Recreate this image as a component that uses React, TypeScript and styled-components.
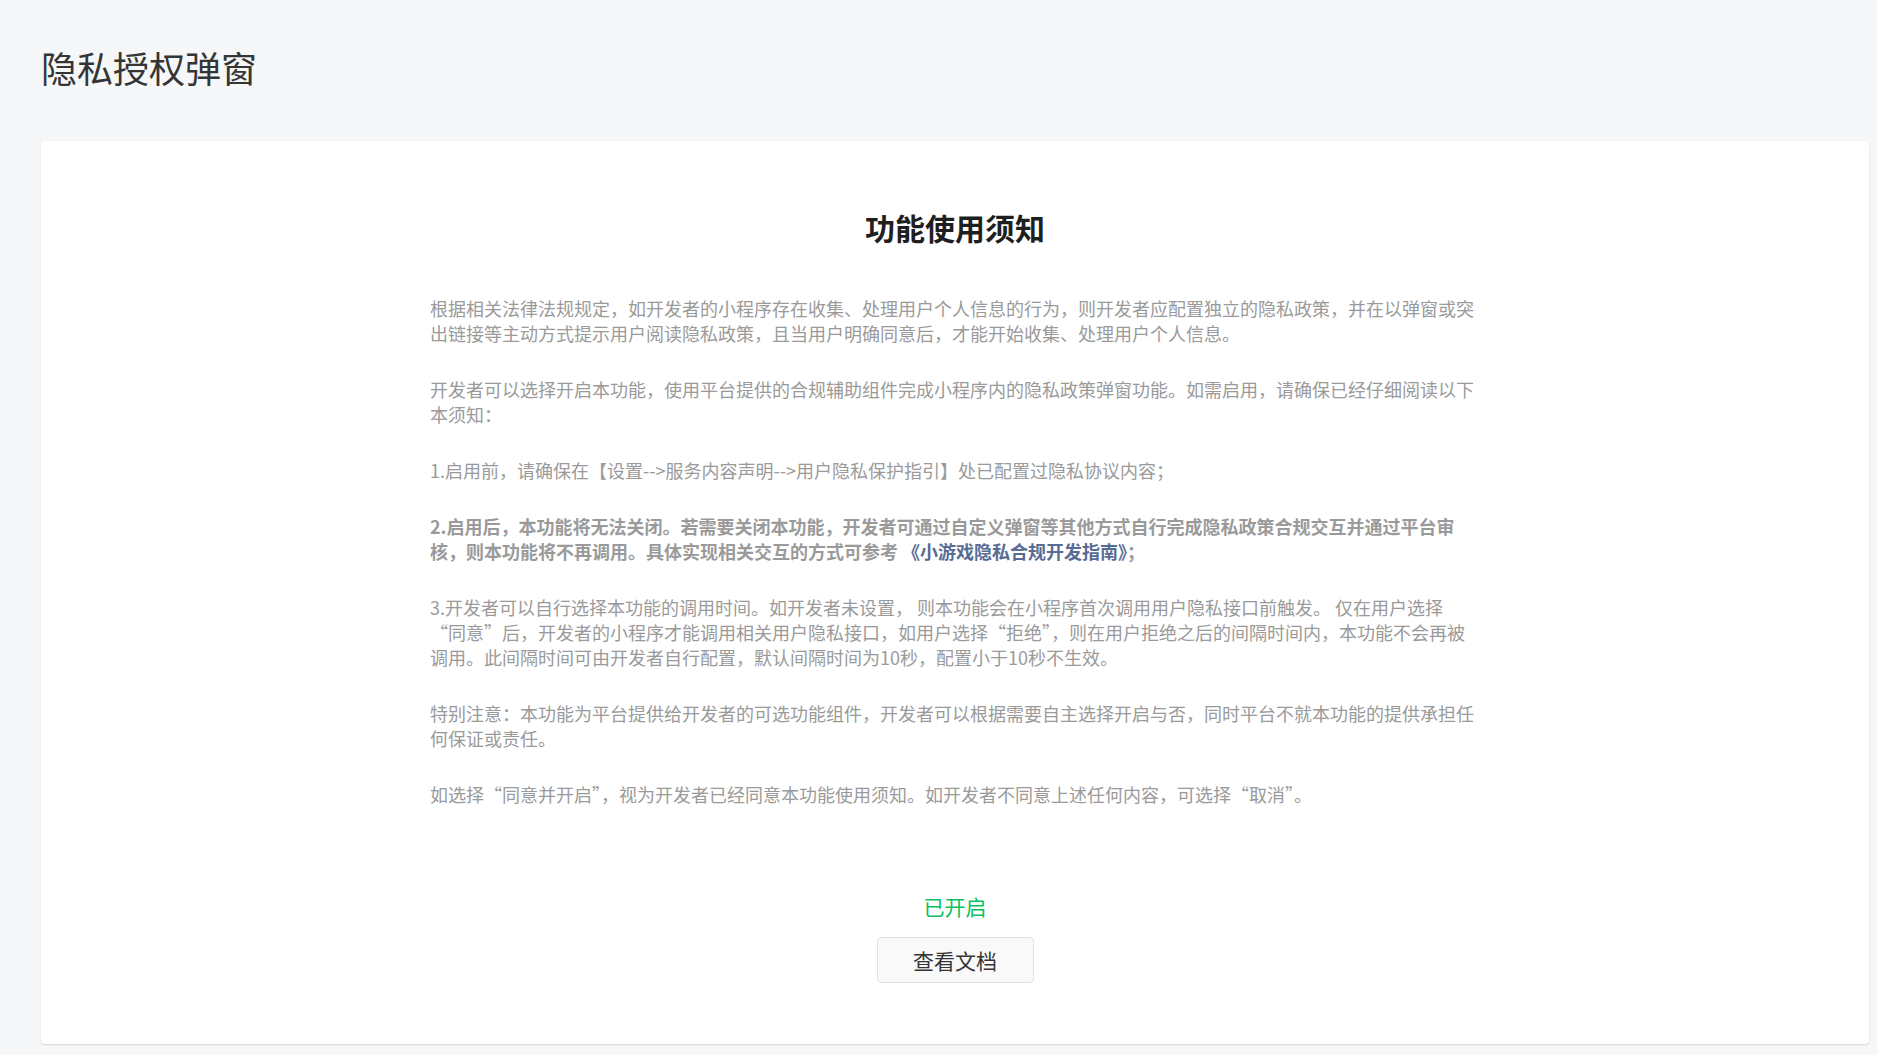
import styled, { createGlobalStyle } from 'styled-components';

const GlobalStyle = createGlobalStyle`
  html, body {
    margin: 0;
    padding: 0;
    background: #f6f7f9;
  }
  body {
    font-family: "Noto Sans CJK SC", "Noto Sans", sans-serif;
  }
`;

const Page = styled.div`
  min-height: 1055px;
  box-sizing: border-box;
  padding: 0 8px 11px 41px;
  display: flex;
  flex-direction: column;
`;

const PageTitle = styled.h1`
  margin: 0;
  padding-top: 42px;
  height: 141px;
  box-sizing: border-box;
  font-size: 36px;
  line-height: 50px;
  font-weight: 400;
  color: #353535;
`;

const Card = styled.section`
  background: #fff;
  border-radius: 4px;
  box-shadow: 0 1px 2px rgba(0, 0, 0, 0.14);
  padding: 66px 0 61px;
  display: flex;
  flex-direction: column;
  align-items: center;
`;

const Heading = styled.h2`
  margin: 0 0 49px;
  font-size: 30px;
  line-height: 40px;
  font-weight: 700;
  color: #1f1f1f;
`;

const Notice = styled.div`
  width: 1050px;
  display: flex;
  flex-direction: column;
  gap: 31px;
`;

const Para = styled.p<{ $strong?: boolean }>`
  margin: 0;
  font-size: 18px;
  line-height: 25px;
  color: #9a9a9a;
  font-weight: ${(p) => (p.$strong ? 700 : 400)};
`;

// keeps a quoted word (or word pair) on one line
const Keep = styled.span`
  white-space: nowrap;
`;

const Link = styled.a`
  color: #576b95;
  text-decoration: none;
  cursor: pointer;
`;

const Status = styled.div`
  margin-top: 85px;
  font-size: 21px;
  line-height: 28px;
  color: #07c160;
`;

const DocButton = styled.button`
  margin-top: 17px;
  width: 157px;
  height: 46px;
  box-sizing: border-box;
  border: 1px solid #e2e2e2;
  border-radius: 4px;
  background: #f9f9f9;
  color: #353535;
  font-family: inherit;
  font-size: 21px;
  cursor: pointer;
`;

export default function App() {
  return (
    <>
      <GlobalStyle />
      <Page>
        <PageTitle>隐私授权弹窗</PageTitle>
        <Card>
          <Heading>功能使用须知</Heading>
          <Notice>
            <Para>
              根据相关法律法规规定，如开发者的小程序存在收集、处理用户个人信息的行为，则开发者应配置独立的隐私政策，并在以弹窗或突出链接等主动方式提示用户阅读隐私政策，且当用户明确同意后，才能开始收集、处理用户个人信息。
            </Para>
            <Para>
              开发者可以选择开启本功能，使用平台提供的合规辅助组件完成小程序内的隐私政策弹窗功能。如需启用，请确保已经仔细阅读以下本须知：
            </Para>
            <Para>
              1.启用前，请确保在【设置--&gt;服务内容声明--&gt;用户隐私保护指引】处已配置过隐私协议内容；
            </Para>
            <Para $strong>
              2.启用后，本功能将无法关闭。若需要关闭本功能，开发者可通过自定义弹窗等其他方式自行完成隐私政策合规交互并通过平台审核，则本功能将不再调用。具体实现相关交互的方式可参考{' '}
              <Link>《小游戏隐私合规开发指南》</Link>；
            </Para>
            <Para>
              3.开发者可以自行选择本功能的调用时间。如开发者未设置， 则本功能会在小程序首次调用用户隐私接口前触发。 仅在用户选择<wbr />
              <Keep>“同意”</Keep>后，开发者的小程序才能调用相关用户隐私接口，如用户选择“拒绝”，则在用户拒绝之后的间隔时间内，本功能不会再被<Keep>调用。</Keep>此间隔时间可由开发者自行配置，默认间隔时间为10秒，配置小于10秒不生效。
            </Para>
            <Para>
              特别注意：本功能为平台提供给开发者的可选功能组件，开发者可以根据需要自主选择开启与否，同时平台不就本功能的提供承担任何保证或责任。
            </Para>
            <Para>
              如选择“同意并开启”，视为开发者已经同意本功能使用须知。如开发者不同意上述任何内容，可选择“取消”。
            </Para>
          </Notice>
          <Status>已开启</Status>
          <DocButton>查看文档</DocButton>
        </Card>
      </Page>
    </>
  );
}
